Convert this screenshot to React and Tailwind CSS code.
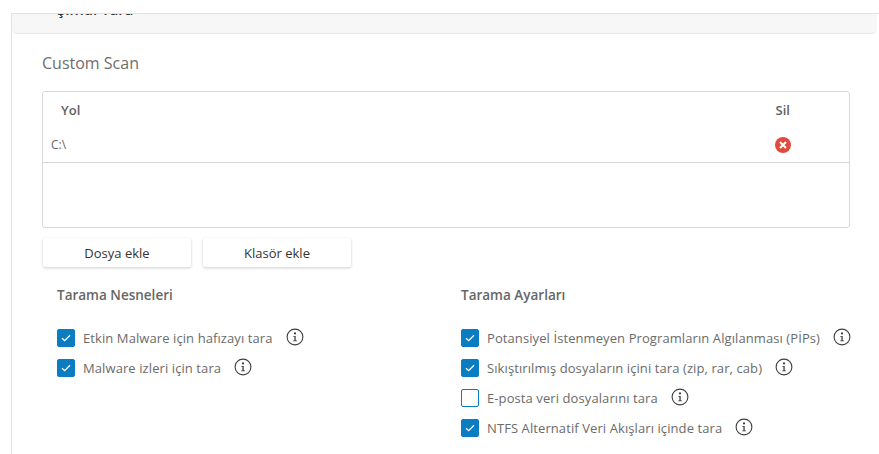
import React from "react";

const FONT = "[font-family:'Open_Sans','Noto_Sans',sans-serif]";

const LEFT_OPTIONS = [
  { label: "Etkin Malware için hafızayı tara", checked: true },
  { label: "Malware izleri için tara", checked: true },
];

const RIGHT_OPTIONS = [
  { label: "Potansiyel İstenmeyen Programların Algılanması (PİPs)", checked: true },
  { label: "Sıkıştırılmış dosyaların içini tara (zip, rar, cab)", checked: true },
  { label: "E-posta veri dosyalarını tara", checked: false },
  { label: "NTFS Alternatif Veri Akışları içinde tara", checked: true },
];

function InfoIcon() {
  return (
    <svg width="18" height="18" viewBox="0 0 18 18" className="ml-[13px] shrink-0 -translate-y-[1px]">
      <circle cx="9" cy="9" r="7.9" fill="none" stroke="#3f3f3f" strokeWidth="1.1" />
      <circle cx="9" cy="5.4" r="1.1" fill="#3f3f3f" />
      <path d="M7.3 7.9H9.7V12.4H11V13.3H7.2V12.4H8.4V8.8H7.3Z" fill="#3f3f3f" />
    </svg>
  );
}

function Option({ label, checked }) {
  return (
    <div className="flex h-[18px] items-center">
      <span
        className={`flex h-[18px] w-[18px] shrink-0 items-center justify-center rounded-[2px] border border-[#0a7cc1] ${checked ? "bg-[#0a7cc1]" : "bg-white"}`}
      >
        {checked && (
          <svg width="10" height="8" viewBox="0 0 10 8">
            <path d="M1 4.2L3.7 6.7L9 1.2" fill="none" stroke="white" strokeWidth="1.3" />
          </svg>
        )}
      </span>
      <span className="ml-[8px] whitespace-nowrap pt-[1px] text-[13px] tracking-[0.09px] text-[#6b6b6b]">{label}</span>
      <InfoIcon />
    </div>
  );
}

function ActionButton({ children }) {
  return (
    <button className="h-[29px] w-[148px] rounded-[2px] bg-white pt-[2px] text-[13px] text-[#333] shadow-[0_1px_3px_rgba(0,0,0,0.2)]">
      {children}
    </button>
  );
}

export default function App() {
  return (
    <div className={`h-[454px] w-[879px] overflow-hidden bg-white ${FONT}`}>
      <div className="ml-[11px] mt-[13px] h-[441px] border-l border-t border-[#e3e3e3]">
        {/* collapsed section, title is cut off by the scroll edge */}
        <div className="mr-[2px] h-[20px] overflow-hidden rounded-b-[5px] border-b border-[#e6e6e6] bg-[#f7f7f7]">
          <div className="-mt-[16px] ml-[45px] text-[15px] font-semibold leading-[22px] text-[#333]">Şimdi Tara</div>
        </div>

        <div className="pl-[30px] pr-[29px]">
          <h2 className="mt-[18px] text-[16px] leading-[22px] text-[#6e6e6e]">Custom Scan</h2>

          <div className="mt-[17px] h-[137px] rounded-[3px] border border-[#d9d9d9]">
            <div className="flex h-[36px] items-center pl-[18px] pr-[59px] pt-[1px] text-[13px] font-semibold text-[#5f5f5f]">
              <span className="flex-1">Yol</span>
              <span className="font-semibold">Sil</span>
            </div>
            <div className="flex h-[35px] items-center border-b border-[#d9d9d9] pl-[8px] pr-[58px] text-[12px] text-[#666]">
              <span className="flex-1">C:\</span>
              <span className="flex h-[16px] w-[16px] items-center justify-center rounded-full bg-[#e04b3f]">
                <svg width="8" height="8" viewBox="0 0 8 8">
                  <path d="M1 1L7 7M7 1L1 7" stroke="white" strokeWidth="2" />
                </svg>
              </span>
            </div>
          </div>

          <div className="ml-[1px] mt-[10px] flex gap-[12px]">
            <ActionButton>Dosya ekle</ActionButton>
            <ActionButton>Klasör ekle</ActionButton>
          </div>

          <div className="mt-[18px] flex pl-[15px]">
            <div className="w-[404px] shrink-0">
              <h3 className="text-[13.5px] font-semibold leading-[20px] text-[#666]">Tarama Nesneleri</h3>
              <div className="mt-[24px] flex flex-col gap-[12px]">
                {LEFT_OPTIONS.map((o) => (
                  <Option key={o.label} {...o} />
                ))}
              </div>
            </div>
            <div className="shrink-0">
              <h3 className="text-[13.5px] font-semibold leading-[20px] text-[#666]">Tarama Ayarları</h3>
              <div className="mt-[24px] flex flex-col gap-[12px]">
                {RIGHT_OPTIONS.map((o) => (
                  <Option key={o.label} {...o} />
                ))}
              </div>
            </div>
          </div>
        </div>
      </div>
    </div>
  );
}
